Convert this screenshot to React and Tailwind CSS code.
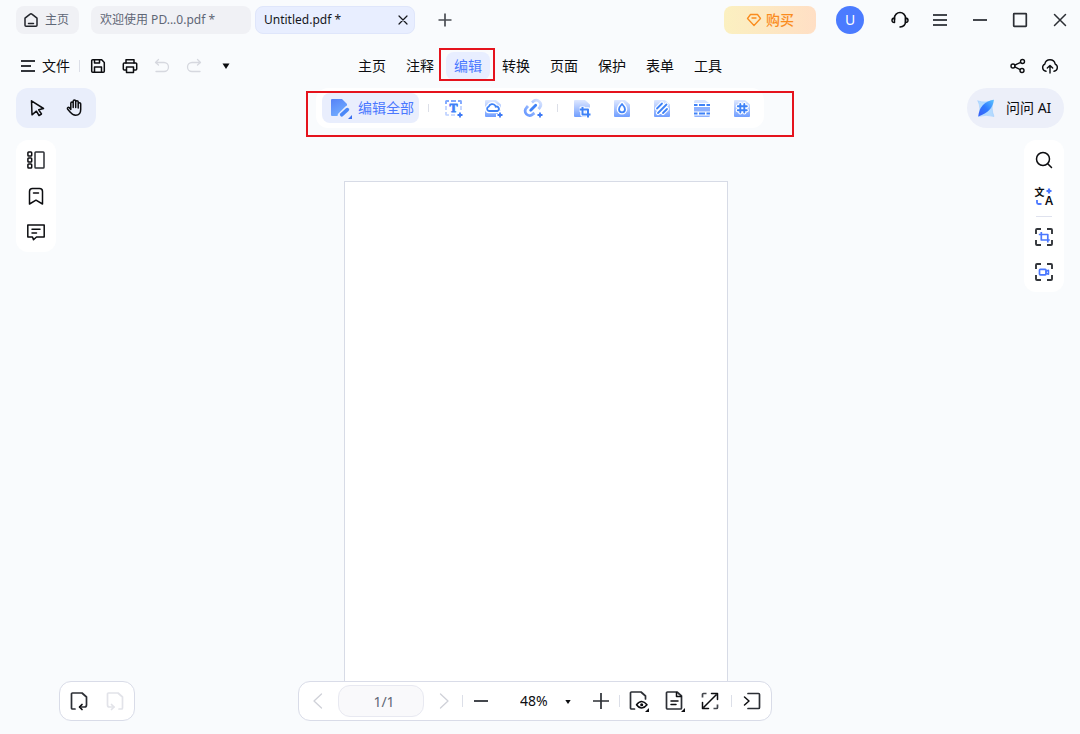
import { useState } from "react";
import clsx from "clsx";

const MENU = ["主页", "注释", "编辑", "转换", "页面", "保护", "表单", "工具"];

function Icon({ children, className = "size-5", box = 20, width = 1.5 }) {
  return (
    <svg
      viewBox={`0 0 ${box} ${box}`}
      className={clsx("shrink-0 overflow-visible", className)}
      fill="none"
      stroke="currentColor"
      strokeWidth={width}
      strokeLinecap="round"
      strokeLinejoin="round"
      aria-hidden="true"
    >
      {children}
    </svg>
  );
}

function IconButton({ label, className = "w-8 h-8", children, ...rest }) {
  return (
    <button type="button" aria-label={label} className={clsx("flex items-center justify-center shrink-0", className)} {...rest}>
      {children}
    </button>
  );
}

function Divider({ className }) {
  return <span className={clsx("w-px shrink-0 bg-[#dcdfe8]", className)} />;
}

function Gradients() {
  return (
    <svg className="absolute size-0" aria-hidden="true">
      <defs>
        <linearGradient id="tile" x1="0" y1="0" x2="0" y2="1">
          <stop offset="0" stopColor="#dfe8ff" />
          <stop offset="0.55" stopColor="#a3c0ff" />
          <stop offset="1" stopColor="#6f9dff" />
        </linearGradient>
        <linearGradient id="sheet" x1="0" y1="0" x2="0.5" y2="1">
          <stop offset="0" stopColor="#5582f7" />
          <stop offset="1" stopColor="#70abff" />
        </linearGradient>
        <linearGradient id="ring" x1="17" y1="2" x2="3" y2="17" gradientUnits="userSpaceOnUse">
          <stop offset="0" stopColor="#dbe6ff" />
          <stop offset="1" stopColor="#6c9bff" />
        </linearGradient>
        <linearGradient id="wing" x1="1" y1="0" x2="0" y2="1">
          <stop offset="0" stopColor="#5cc4ff" />
          <stop offset="0.5" stopColor="#2f7bff" />
          <stop offset="1" stopColor="#3a5cf5" />
        </linearGradient>
      </defs>
    </svg>
  );
}

// Page tile with a clipped top right corner, shared by most edit tools
function Tile() {
  return <path d="M2 3Q2 2 3 2h10l5 4.500V18q0 1-1 1H3q-1 0-1-1Z" fill="url(#tile)" stroke="none" />;
}

function Plus() {
  return <path d="M16 14.500v5M13.500 17h5" stroke="#3f7af5" strokeWidth="1.800" strokeLinecap="butt" />;
}

const CLOUD = "M5 13a2.200 2.200 0 0 1-.3-4.300A3.800 3.800 0 0 1 11.200 7.500q.4.500.4 1.300A2.100 2.100 0 0 1 13.500 13Z";
const DROP = "M10 6c2.200 2.300 3 3.700 3 5.300a3 3 0 0 1-6 0c0-1.600.800-3 3-5.300Z";
const STRIPES = "M5 10.500L10 5.500M6 15L14.500 6.500M11 15L15 11";
const HASH = "M8.300 6v8.500M12.300 6v8.500M5.800 8.300h9M5.800 12.300h9";

const INSERT_TOOLS = [
  {
    label: "文本",
    icon: (
      <>
        <path d="M2 6V3.500Q2 3 2.500 3H5M7 3h5M14 3h2.500q.5 0 .5.500V6" stroke="#7fa8ff" strokeWidth="1.900" strokeLinecap="butt" />
        <path d="M2 8v4M17 8v4M2 14v2.500q0 .5.500.5H5M7 17h4" stroke="#bdd1ff" strokeWidth="1.700" strokeLinecap="butt" />
        <text x="9.500" y="14" textAnchor="middle" fontSize="12" fontWeight="700" fontFamily="Liberation Serif, serif" fill="#3f82f7" stroke="#3f82f7" strokeWidth="0.800">T</text>
        <Plus />
      </>
    ),
  },
  {
    label: "图片",
    icon: (
      <>
        <path d="M1 3q0-1 1-1h10l5 4.500V13h-3v3h-2v3H2q-1 0-1-1Z" fill="url(#tile)" stroke="none" />
        <path d={CLOUD} stroke="#fff" strokeWidth="4.500" />
        <path d={CLOUD} fill="#fff" stroke="#3f82f7" strokeWidth="1.800" />
        <Plus />
      </>
    ),
  },
  {
    label: "链接",
    icon: (
      <>
        <path d="M8 4.500l1.500-1.300a4.500 4.500 0 0 1 6.300 6.300L14.500 11M4 8L2.500 9.700a4.500 4.500 0 0 0 6.300 6.500L10.500 15" stroke="url(#ring)" strokeWidth="2.800" strokeLinecap="butt" />
        <path d="M6.700 12.300l5-5" stroke="#3f82f7" strokeWidth="2.800" />
        <Plus />
      </>
    ),
  },
];

const PAGE_TOOLS = [
  {
    label: "裁剪",
    icon: (
      <>
        <path d="M2 3Q2 2 3 2h10l5 4.500V19H3q-1 0-1-1Z" fill="url(#tile)" stroke="none" />
        <path d="M7.500 11.500H16.500V20M10.500 8.500v8H19.500" stroke="#fff" strokeWidth="4.500" strokeLinecap="butt" />
        <path d="M7.700 11.500H16V19.500M10.500 9v7.500H18.500" stroke="#3f82f7" strokeWidth="2" strokeLinecap="butt" />
      </>
    ),
  },
  {
    label: "水印",
    icon: (
      <>
        <Tile />
        <path d={DROP} stroke="#fff" strokeWidth="4.500" />
        <path d={DROP} fill="#fff" stroke="#3f82f7" strokeWidth="1.800" />
      </>
    ),
  },
  {
    label: "背景",
    icon: (
      <>
        <Tile />
        <path d={STRIPES} stroke="#fff" strokeWidth="4.200" />
        <path d={STRIPES} stroke="#3f82f7" strokeWidth="1.800" />
      </>
    ),
  },
  {
    label: "页眉页脚",
    icon: (
      <>
        <path d="M2 9h16v4.500H2ZM2 17.500h16q0 1.500-1.500 1.500h-13Q2 19 2 17.500Z" fill="#8db1ff" stroke="none" />
        <path d="M2 5V3.500Q2 2 3.500 2H13l4 3Z" fill="#d5e2ff" stroke="none" />
        <path d="M2 7h3.500M7 7h6M14.500 7H18M2 15.500h3.500M7 15.500h6M14.500 15.500H18" stroke="#3f82f7" strokeWidth="1.800" strokeLinecap="butt" />
      </>
    ),
  },
  {
    label: "贝茨码",
    icon: (
      <>
        <Tile />
        <path d={HASH} stroke="#fff" strokeWidth="4.200" />
        <path d={HASH} stroke="#3f82f7" strokeWidth="1.900" />
      </>
    ),
  },
];

function TitleBar() {
  return (
    <header className="h-10 flex items-center pl-4">
      <button type="button" className="h-7 w-[63px] pl-[5px] rounded-lg bg-[#f0f1f5] flex items-center gap-1 text-xs text-[#5f6776]">
        <Icon className="size-5 text-[#22252b]">
          <path d="M4 8.200l4.800-3.900a2 2 0 0 1 2.400 0L16 8.200V15.200a1 1 0 0 1-1 1H5a1 1 0 0 1-1-1Z" />
          <path d="M7.500 13.500h5" />
        </Icon>
        主页
      </button>
      <button type="button" className="ml-3 h-7 w-40 px-[9px] rounded-lg bg-[#f0f1f5] text-left text-xs text-[#5f6776] whitespace-nowrap">
        欢迎使用 PD...0.pdf *
      </button>
      <div className="ml-1 h-7 w-40 pl-2 rounded-lg bg-[#e8eeff] border border-[#dfe6fb] flex items-center justify-between text-xs text-[#15171c] whitespace-nowrap">
        <button type="button">Untitled.pdf *</button>
        <IconButton label="关闭标签" className="size-[22px]">
          <Icon width={1.200} className="size-5">
            <path d="M6 6l8 8M14 6l-8 8" />
          </Icon>
        </IconButton>
      </div>
      <IconButton label="新建标签" className="ml-3.5 size-8">
        <Icon><path d="M3.500 10h13M10 3.500v13" strokeLinecap="butt" stroke="#4a4d53" strokeWidth="1.700" /></Icon>
      </IconButton>

      <div className="ml-auto flex items-center">
        <button type="button" className="mr-5 h-7 w-[92px] rounded-lg bg-linear-to-r from-[#fbf0c0] to-[#ffdfc5] flex items-center justify-center gap-1 text-sm font-medium text-[#fa8c1e]">
          <Icon className="size-4" box={16} width={1.300}>
            <path d="M4.500 2.500h7l3 4L8 13.500 1.500 6.500Z" />
            <path d="M6 6h4" />
          </Icon>
          购买
        </button>
        <button type="button" aria-label="账户" className="mr-4 size-7 rounded-full bg-[#4b7bff] text-sm text-white">U</button>
        <IconButton label="客服" className="size-10">
          <Icon>
            <path d="M4.500 9.500V8a5.500 5.500 0 0 1 11 0v3.500q0 5-5.500 5.500" />
            <path d="M4.500 8Q2 8 2 10.300T4.500 12.500ZM15.500 8q2.500 0 2.500 2.300t-2.500 2.200Z" />
          </Icon>
        </IconButton>
        <IconButton label="菜单" className="size-10">
          <Icon><path d="M3 5h14M3 10h14M3 15h14" stroke="#44474d" strokeWidth="2" strokeLinecap="butt" /></Icon>
        </IconButton>
        <IconButton label="最小化" className="size-10">
          <Icon><path d="M3 10h14" stroke="#44474d" strokeWidth="2" strokeLinecap="butt" /></Icon>
        </IconButton>
        <IconButton label="最大化" className="size-10">
          <Icon><rect x="3.700" y="3.700" width="12.600" height="12.600" rx="0.500" stroke="#2c2f35" strokeWidth="1.700" /></Icon>
        </IconButton>
        <IconButton label="关闭" className="size-10">
          <Icon><path d="M4.500 4.500l11 11M15.500 4.500l-11 11" stroke="#2c2f35" /></Icon>
        </IconButton>
      </div>
    </header>
  );
}

function MenuRow({ active, onSelect }) {
  return (
    <div className="h-12 pt-1 grid grid-cols-[1fr_auto_1fr] items-center">
      <div className="flex items-center pl-[18px]">
        <button type="button" className="flex items-center gap-1 text-sm">
          <Icon><path d="M3 5h14M3 10h10M3 15h14" stroke="#33363b" strokeWidth="1.800" strokeLinecap="butt" /></Icon>
          文件
        </button>
        <Divider className="h-3 ml-[9px] mr-0.5" />
        <IconButton label="保存">
          <Icon>
            <path d="M3.700 4.700a1 1 0 0 1 1-1h9l2.600 2.800v8.800a1 1 0 0 1-1 1H4.700a1 1 0 0 1-1-1Z" />
            <path d="M6.500 4v3h5V4M6.500 16v-5h7v5" />
          </Icon>
        </IconButton>
        <IconButton label="打印">
          <Icon>
            <path d="M6 7V3.700h8V7" />
            <path d="M6 14H4.300a1 1 0 0 1-1-1V8a1 1 0 0 1 1-1h11.400a1 1 0 0 1 1 1v5a1 1 0 0 1-1 1H14" />
            <path d="M6.500 11h7v5.500h-7Z" />
          </Icon>
        </IconButton>
        <IconButton label="撤销" disabled className="w-8 h-8 text-[#d6d8df]">
          <Icon width={1.300}><path d="M6.500 3.500L3.500 6.500l3 2.500M4 6.500h8a4.500 4.500 0 0 1 0 9H4" /></Icon>
        </IconButton>
        <IconButton label="重做" disabled className="w-8 h-8 text-[#d6d8df]">
          <Icon width={1.300}><path d="M13.500 3.500l3 3-3 2.500M16 6.500H8a4.500 4.500 0 0 0 0 9H16" /></Icon>
        </IconButton>
        <IconButton label="更多">
          <Icon><path d="M6.500 7.500h7L10 13Z" fill="currentColor" stroke="none" /></Icon>
        </IconButton>
      </div>

      <nav className="flex gap-1">
        {MENU.map((item) => (
          <div key={item} className="relative">
            <button
              type="button"
              onClick={() => onSelect(item)}
              className={clsx("block h-7 w-11 rounded-lg text-sm", item === active && "bg-[#e8eeff] text-[#4b78ff]")}
            >
              {item}
            </button>
            {item === "编辑" && <span className="absolute -left-[7px] -right-[5px] -top-1 -bottom-px border-2 border-[#e5131d] pointer-events-none" />}
          </div>
        ))}
      </nav>

      <div className="flex justify-end pr-3.5">
        <IconButton label="分享">
          <Icon width={1.400}>
            <circle cx="5" cy="10" r="2" />
            <circle cx="14.500" cy="5.500" r="2" />
            <circle cx="14" cy="14.500" r="2" />
            <path d="M6.800 9.100l5.900-2.700M6.700 10.900l5.500 2.700" />
          </Icon>
        </IconButton>
        <IconButton label="上传到云">
          <Icon width={1.400}>
            <path d="M6 15.300a3.800 3.800 0 0 1-1.200-7.200 5.300 5.300 0 0 1 10.400 0A3.800 3.800 0 0 1 14 15.300" />
            <path d="M10 17V9.500M7.300 12L10 9.500l2.700 2.500" />
          </Icon>
        </IconButton>
      </div>
    </div>
  );
}

function ToolRow() {
  return (
    <div className="px-4 grid grid-cols-[1fr_auto_1fr] items-center">
      <div className="flex">
        <div className="h-10 px-0.5 rounded-xl bg-[#e9eefb] flex items-center">
          <IconButton label="选择" className="w-[38px] h-10">
            <Icon>
              <path d="M4.500 2.800l12 7.700-4.800 1.300 2.800 4.200-2.500 1.500-2.600-4.300-4.400 3.600Z" />
            </Icon>
          </IconButton>
          <IconButton label="手型" className="w-[38px] h-10">
            <Icon>
              <path d="M5.800 11.500V5.200a1.200 1.200 0 0 1 2.400 0V9.500M8.200 9.500V3.200a1.200 1.200 0 0 1 2.500 0V9.500M10.700 9V4a1.200 1.200 0 0 1 2.500 0V10M13.200 10V6a1.200 1.200 0 0 1 2.500 0v5.500c0 3.700-2 5.700-5 5.700-2.700 0-4-1-5.200-2.800L2.500 10.900a1.100 1.100 0 0 1 1.700-1.300l1.600 1.900" />
            </Icon>
          </IconButton>
        </div>
      </div>

      <div className="relative h-10 pl-1.5 pr-0.5 rounded-xl bg-white flex items-center">
        <button type="button" className="h-[30px] w-[97px] pl-2 rounded-lg bg-[#e9eefd] flex items-center gap-1 text-sm text-[#4b78ff] whitespace-nowrap">
          <Icon box={24} className="size-6">
            <path d="M1 4q0-1 1-1h10l5 5v6l-6 6H2q-1 0-1-1Z" fill="url(#sheet)" stroke="none" />
            <path d="M11 19.500l6.500-6.500" stroke="#e9eefd" strokeWidth="6.500" />
            <path d="M11.800 18.700l5.500-5" stroke="#4a88f8" strokeWidth="3.800" />
            <path d="M22 19v4h-4Z" fill="#3b6ff0" stroke="none" />
          </Icon>
          编辑全部
        </button>
        <Divider className="h-2 ml-[9px] mr-[5px]" />
        {INSERT_TOOLS.map((tool) => (
          <IconButton key={tool.label} label={tool.label} className="size-10">
            <Icon>{tool.icon}</Icon>
          </IconButton>
        ))}
        <Divider className="h-2 ml-[3px] mr-1" />
        {PAGE_TOOLS.map((tool) => (
          <IconButton key={tool.label} label={tool.label} className="size-10">
            <Icon>{tool.icon}</Icon>
          </IconButton>
        ))}
        <span className="absolute -left-2.5 -right-[30px] top-[3px] -bottom-[9px] border-2 border-[#e5131d] pointer-events-none" />
      </div>

      <div className="flex justify-end">
        <button type="button" className="h-10 w-[97px] pl-[7px] rounded-full bg-[#eceff9] flex items-center gap-2 text-sm whitespace-nowrap">
          <Icon box={24} className="size-6">
            <path d="M4 5q8 2.500 15.500-1Q16.500 12 20 20.500 12 18 4.500 20.500 7.500 12 4 5Z" fill="#b4dbff" stroke="#94c8ff" strokeWidth="0.500" />
            <path d="M19.800 3.800Q19 15.500 4.300 20.500 5.500 6.500 19.800 3.800Z" fill="url(#wing)" stroke="none" />
          </Icon>
          问问 AI
        </button>
      </div>
    </div>
  );
}

function LeftRail() {
  return (
    <aside className="w-10 py-0.5 rounded-xl bg-white flex flex-col items-center self-start">
      <IconButton label="缩略图" className="w-10 h-9">
        <Icon>
          <rect x="1.900" y="2" width="3.800" height="4" rx="0.800" />
          <rect x="1.900" y="8" width="3.800" height="4" rx="0.800" />
          <rect x="1.900" y="14" width="3.800" height="4" rx="0.800" />
          <rect x="9" y="2" width="9" height="16" rx="0.800" stroke="#2c2f35" />
        </Icon>
      </IconButton>
      <IconButton label="书签" className="w-10 h-9">
        <Icon>
          <path d="M3.500 5.500a3 3 0 0 1 3-3h7a3 3 0 0 1 3 3V18L10 14.200 3.500 18Z" />
          <path d="M7.500 7h5" />
        </Icon>
      </IconButton>
      <IconButton label="注释" className="w-10 h-9">
        <Icon>
          <path d="M1.800 3h16.400v12H10.500L7.500 17.700 6.500 15H1.800Z" />
          <path d="M6 7.300h8M6 11h4.500" />
        </Icon>
      </IconButton>
    </aside>
  );
}

const CORNERS = "M2 7V3a1 1 0 0 1 1-1h4M13 2h4a1 1 0 0 1 1 1v4M18 13v4a1 1 0 0 1-1 1h-4M7 18H3a1 1 0 0 1-1-1v-4";

function RightRail() {
  return (
    <aside className="w-10 pt-0.5 pb-[3px] rounded-xl bg-white flex flex-col items-center self-start">
      <IconButton label="搜索" className="w-10 h-9">
        <Icon>
          <circle cx="9" cy="9" r="6.500" />
          <path d="M14 14l3.500 3.500" />
        </Icon>
      </IconButton>
      <IconButton label="翻译" className="w-10 h-9">
        <Icon box={24} className="size-6">
          <text x="2.500" y="12" fontSize="10" fontWeight="700" fontFamily="Noto Sans CJK SC, sans-serif" fill="currentColor" stroke="none">文</text>
          <text x="17" y="21" textAnchor="middle" fontSize="12" fontWeight="600" fontFamily="Noto Sans, sans-serif" fill="currentColor" stroke="none">A</text>
          <path d="M17 4.500v5M14.500 7h5" stroke="#4b78ff" strokeWidth="2.200" strokeLinecap="butt" />
          <path d="M5 16v2.500q0 1.500 1.500 1.500h3" stroke="#4b78ff" strokeWidth="1.800" strokeLinecap="butt" />
        </Icon>
      </IconButton>
      <span className="w-4 h-px my-[2px] bg-[#dfe2ee]" />
      <IconButton label="截图" className="w-10 h-9">
        <Icon>
          <path d={CORNERS} strokeWidth="1.900" stroke="#33363b" strokeLinecap="butt" />
          <path d="M4.800 7.500h9v8M7.300 5v8h8.500" stroke="#4b78ff" strokeWidth="1.700" strokeLinecap="butt" />
        </Icon>
      </IconButton>
      <IconButton label="录屏" className="w-10 h-[34px]">
        <Icon>
          <path d={CORNERS} strokeWidth="1.900" stroke="#33363b" strokeLinecap="butt" />
          <rect x="5.500" y="7.300" width="6.500" height="5.600" rx="0.800" stroke="#4b78ff" strokeWidth="1.700" />
          <path d="M12 9.300l2.500-1v4l-2.500-1" stroke="#4b78ff" />
        </Icon>
      </IconButton>
    </aside>
  );
}

function StatusBar() {
  const [page, setPage] = useState("1/1");
  return (
    <footer className="pr-2.5 pb-[13px] grid grid-cols-[1fr_auto_1fr]">
      <div className="flex pl-[59px]">
        <div className="h-10 px-px rounded-xl border border-[#d9dce8] bg-white flex items-center">
          <IconButton label="上一视图" className="w-9 h-9">
            <Icon width={1.700}>
              <path d="M6 18H3.500a1 1 0 0 1-1-1V3a1 1 0 0 1 1-1h9.500l4.500 4V14a2 2 0 0 1-2 2H11" stroke="#2c2f35" />
              <path d="M13 13.500L10.500 16l2.500 2.500" />
            </Icon>
          </IconButton>
          <IconButton label="下一视图" disabled className="w-9 h-9 text-[#e2e3e9]">
            <Icon width={1.700}>
              <path d="M14 18h2.500a1 1 0 0 0 1-1V6L13 2H3.500a1 1 0 0 0-1 1v11a2 2 0 0 0 2 2H9" />
              <path d="M6.500 13.500L9 16l-2.500 2.500" />
            </Icon>
          </IconButton>
        </div>
      </div>

      <div className="h-10 px-[3px] rounded-xl border border-[#d9dce8] bg-white flex items-center">
        <IconButton label="上一页" disabled className="w-8 h-8 text-[#cfd1d8]">
          <Icon width={1.300}><path d="M13.500 3L6 10l7.500 7" /></Icon>
        </IconButton>
        <input
          aria-label="页码"
          value={page}
          onChange={(e) => setPage(e.target.value)}
          className="mx-1 h-8 w-[86px] pl-1.5 rounded-xl border border-[#e8e9f1] bg-[#f9f9fb] text-sm text-center text-[#5f6776]"
        />
        <IconButton label="下一页" disabled className="w-8 h-8 text-[#cfd1d8]">
          <Icon width={1.300}><path d="M6.500 3L14 10l-7.500 7" /></Icon>
        </IconButton>
        <Divider className="h-3 mx-0.5" />
        <IconButton label="缩小">
          <Icon><path d="M3 10h14" stroke="#44474d" strokeWidth="2" strokeLinecap="butt" /></Icon>
        </IconButton>
        <div className="relative ml-[18px] mr-1 flex items-center">
          <select aria-label="缩放" defaultValue="48%" className="h-8 w-[66px] pl-[5px] appearance-none bg-transparent text-sm">
            <option>48%</option>
            <option>100%</option>
            <option>200%</option>
          </select>
          <Icon className="size-5 absolute right-[3px] pointer-events-none">
            <path d="M7.300 9h5.400L10 13Z" fill="currentColor" stroke="none" />
          </Icon>
        </div>
        <IconButton label="放大">
          <Icon><path d="M2 10h16M10 2v16" strokeLinecap="butt" stroke="#2c2f35" strokeWidth="1.700" /></Icon>
        </IconButton>
        <Divider className="h-3 ml-0.5 mr-[3px]" />
        <IconButton label="阅读模式">
          <Icon box={22} className="size-[22px]">
            <path d="M6.500 19H3.500a1 1 0 0 1-1-1V3a1 1 0 0 1 1-1h9.500l4.500 4v3" stroke="#2c2f35" strokeWidth="1.700" />
            <path d="M8.500 14.800Q11 11.500 13.700 11.500T19 14.800Q16.500 18 13.700 18T8.500 14.800Z" />
            <circle cx="13.700" cy="14.800" r="0.800" />
            <path d="M21 18v4h-4Z" fill="currentColor" stroke="none" />
          </Icon>
        </IconButton>
        <IconButton label="页面布局" className="ml-1 w-8 h-8">
          <Icon box={22} className="size-[22px]">
            <path d="M3.500 2h9.500l4.500 4v12a1 1 0 0 1-1 1h-13a1 1 0 0 1-1-1V3a1 1 0 0 1 1-1Z" stroke="#2c2f35" strokeWidth="1.700" />
            <path d="M12.500 2.500v4h4.500M7 11h7M7 14.500h5" />
            <path d="M21 18v4h-4Z" fill="currentColor" stroke="none" />
          </Icon>
        </IconButton>
        <IconButton label="全屏" className="ml-[3px] w-8 h-8">
          <Icon>
            <path d="M4 16L16 4M11.500 2.500h6v6M2.500 11.500v6h6" />
            <path d="M2.500 6.500v-3a1 1 0 0 1 1-1h3M17.500 13.500v3a1 1 0 0 1-1 1h-3" stroke="#44474d" strokeWidth="1.700" strokeLinecap="butt" />
          </Icon>
        </IconButton>
        <Divider className="h-3 ml-[5px] mr-1" />
        <IconButton label="收起">
          <Icon>
            <path d="M6 2.500h10.500a1 1 0 0 1 1 1v13a1 1 0 0 1-1 1H6" stroke="#2c2f35" strokeWidth="1.700" />
            <path d="M2.500 6L7 10l-4.500 4" />
          </Icon>
        </IconButton>
      </div>
    </footer>
  );
}

export default function App() {
  const [active, setActive] = useState("编辑");

  return (
    <div className="h-screen flex flex-col overflow-hidden bg-[#f9fbfd] text-[#0c0d10] font-['Noto_Sans','Noto_Sans_CJK_SC',sans-serif]">
      <Gradients />
      <TitleBar />
      <MenuRow active={active} onSelect={setActive} />
      <ToolRow />
      <main className="flex-1 min-h-0 px-4 pt-3 flex">
        <LeftRail />
        <div className="flex-1 pt-[41px] pr-2 flex justify-center">
          <div className="w-96 border border-b-0 border-[#d7dbe6] bg-white" />
        </div>
        <RightRail />
      </main>
      <StatusBar />
    </div>
  );
}
